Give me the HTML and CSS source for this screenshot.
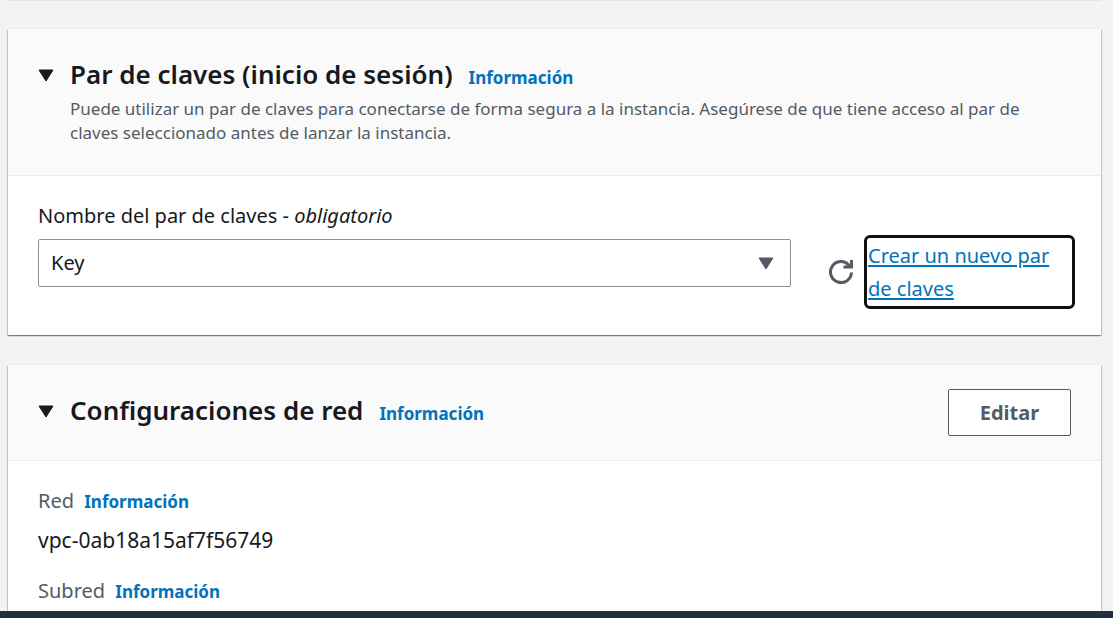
FILE: index.html
```
<!DOCTYPE html>
<html lang="es">
<head>
<meta charset="utf-8">
<meta name="viewport" content="width=device-width, initial-scale=1">
<title>Lanzar una instancia</title>
<link rel="stylesheet" href="styles.css">
</head>
<body>
<main class="content">
  <div class="previous-edge"></div>

  <section class="card">
    <header class="card-header card-header-tall">
      <svg class="caret" viewBox="0 0 16 13" aria-hidden="true"><path d="M1 1h14L8 12z"/></svg>
      <div class="heading">
        <div class="title-row">
          <h2 class="title">Par de claves (inicio de sesión)</h2>
          <a class="info" href="#">Información</a>
        </div>
        <p class="description">Puede utilizar un par de claves para conectarse de forma segura a la instancia. Asegúrese de que tiene acceso al par de claves seleccionado antes de lanzar la instancia.</p>
      </div>
    </header>
    <div class="key-body">
      <label class="label" for="key">Nombre del par de claves - <em>obligatorio</em></label>
      <div class="key-row">
        <div class="select-wrap">
          <select class="select" id="key"><option>Key</option></select>
          <svg class="caret select-caret" viewBox="0 0 16 13" aria-hidden="true"><path d="M1 1h14L8 12z"/></svg>
        </div>
        <div class="key-actions">
          <button class="refresh" type="button" aria-label="Actualizar">
            <svg class="refresh-icon" viewBox="0 0 26 26" aria-hidden="true"><path d="M23.500 13.500A10.500 10.500 0 1 1 20.800 6L22.500 8"/><path d="M15.500 8h8V1"/></svg>
          </button>
          <a class="create-link" href="#">Crear un nuevo par de claves</a>
        </div>
      </div>
    </div>
  </section>

  <section class="card">
    <header class="card-header">
      <svg class="caret" viewBox="0 0 16 13" aria-hidden="true"><path d="M1 1h14L8 12z"/></svg>
      <div class="heading title-row">
        <h2 class="title">Configuraciones de red</h2>
        <a class="info" href="#">Información</a>
      </div>
      <button class="edit" type="button">Editar</button>
    </header>
    <dl class="details">
      <dt class="term">Red <a class="info" href="#">Información</a></dt>
      <dd class="value">vpc-0ab18a15af7f56749</dd>
      <dt class="term">Subred <a class="info" href="#">Información</a></dt>
    </dl>
  </section>
</main>
<footer class="footer"></footer>
</body>
</html>
```
FILE: styles.css
```
* { box-sizing: border-box; }

body {
  margin: 0;
  height: 100vh;
  display: flex;
  flex-direction: column;
  background: #f2f3f3;
  color: #16191f;
  font: 20px/30px "Noto Sans", "Open Sans", sans-serif;
}

h2, p, dl, dd { margin: 0; }

.content {
  flex: 1;
  min-height: 0;
  overflow: hidden;
  padding: 0 12px 0 8px;
}

.previous-edge {
  height: 1px;
  margin-bottom: 28px;
  background: #e3e6e6;
}

.card {
  margin-bottom: 30px;
  background: #fff;
  box-shadow: 0 1px 1px 0 rgba(0, 28, 36, 0.35), 1px 1px 1px 0 rgba(0, 28, 36, 0.15), -1px 1px 1px 0 rgba(0, 28, 36, 0.15), 0 -1px 0 0 #eaeded;
}

.card-header {
  display: flex;
  align-items: flex-start;
  padding: 24px 30px;
  background: #fafafa;
  border-bottom: 1px solid #eaeded;
}

.card-header-tall { padding-bottom: 30px; }

.caret {
  flex: none;
  width: 16px;
  height: 13px;
  fill: currentColor;
  stroke: currentColor;
  stroke-width: 1;
  stroke-linejoin: round;
}

.card-header .caret { margin: 16px 16px 0 0; }

.heading { flex: 1; }

.title-row {
  display: flex;
  align-items: baseline;
  gap: 16px;
}

.title {
  font-size: 26px;
  line-height: 42px;
  font-weight: 600;
}

.info {
  font-size: 17px;
  font-weight: 700;
  color: #0073bb;
  text-decoration: none;
}

.description {
  margin-top: 2px;
  font-size: 17px;
  line-height: 24px;
  color: #545b64;
}

.key-body { padding: 24px 30px 30px; }

.label {
  display: block;
  line-height: 32px;
  margin-bottom: 3px;
}

.key-row {
  display: flex;
  align-items: flex-start;
  gap: 37px;
}

.select-wrap {
  position: relative;
  flex: 1;
  margin-top: 4px;
}

.select {
  display: block;
  width: 100%;
  height: 48px;
  padding: 0 12px;
  appearance: none;
  border: 1px solid #879596;
  border-radius: 2px;
  background: #fff;
  color: inherit;
  font: inherit;
}

.select-caret {
  position: absolute;
  top: 18px;
  right: 17px;
  color: #545b64;
  pointer-events: none;
}

.key-actions {
  width: 243px;
  display: flex;
  align-items: center;
  gap: 14px;
  margin-top: 4px;
}

.refresh {
  padding: 0;
  border: 0;
  background: none;
  line-height: 0;
}

.refresh-icon {
  width: 26px;
  height: 26px;
  fill: none;
  stroke: #545b64;
  stroke-width: 3;
}

.create-link {
  flex: 1;
  line-height: 33px;
  color: #0073bb;
  text-underline-offset: 2px;
  text-decoration-thickness: 2px;
  border-radius: 2px;
  outline: 3px solid #101010;
  outline-offset: 1px;
}

.edit {
  width: 123px;
  height: 47px;
  padding: 0;
  border: 1px solid #545b64;
  border-radius: 2px;
  background: #fff;
  color: #545b64;
  font: 700 20px/30px "Noto Sans", "Open Sans", sans-serif;
}

.details { padding: 24px 30px; }

.term { color: #545b64; line-height: 32px; }

.term .info { margin-left: 5px; }

.value {
  font-size: 21px;
  line-height: 32px;
  margin: 6px 0 19px;
}

.footer {
  flex: none;
  height: 7px;
  background: #232f3e;
}
```
